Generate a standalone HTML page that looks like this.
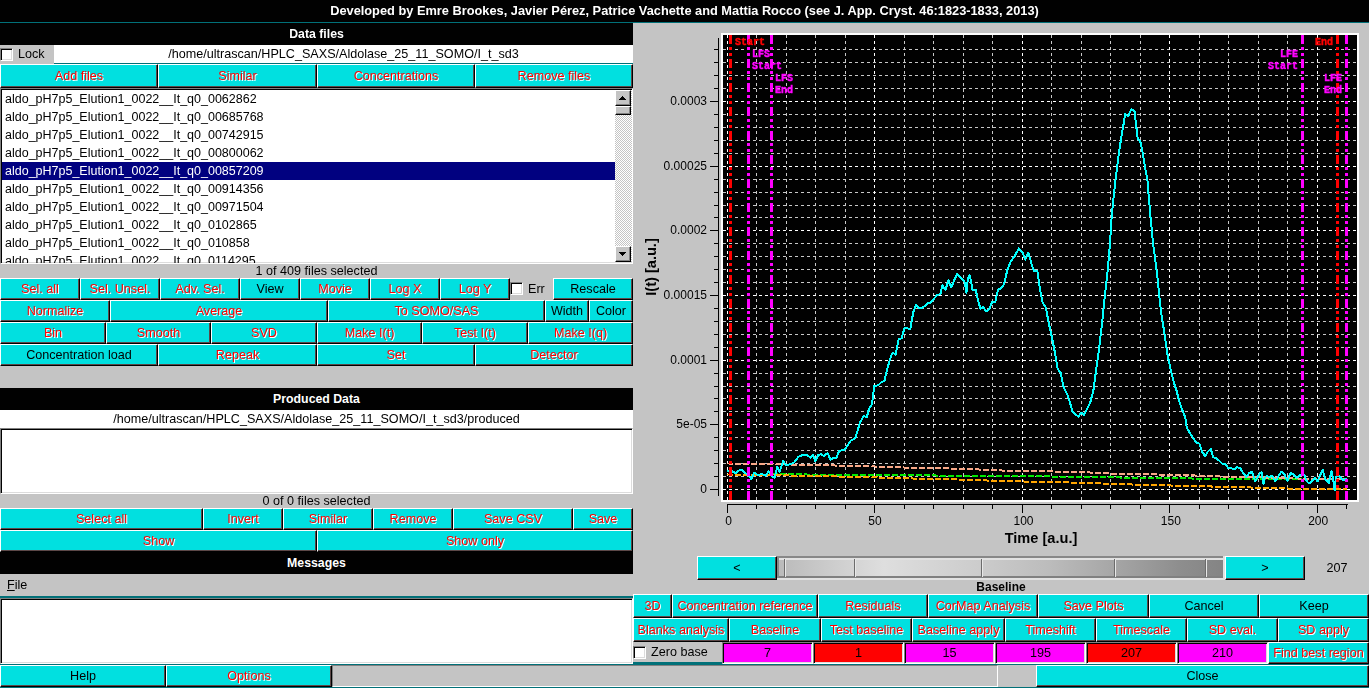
<!DOCTYPE html>
<html><head><meta charset="utf-8"><title>US-SOMO HPLC/KIN</title>
<style>
html,body{margin:0;padding:0}
body{width:1369px;height:688px;overflow:hidden;position:relative;background:#c4c4c4;font-family:"Liberation Sans",Arial,Helvetica,sans-serif;font-size:12.6px;color:#000}
div{position:absolute;box-sizing:border-box;white-space:nowrap}
.r{}
.b{background:#00e0e0;border-top:1px solid #fff;border-left:1px solid #fff;border-right:1px solid #000;border-bottom:1px solid #000;box-shadow:inset -1px -1px 0 #5c4848;text-align:center;color:#f00;text-shadow:1px 1px 0 #fff;overflow:hidden}
.b.en{color:#000;text-shadow:none}
.hdr{background:#000;color:#fff;font-weight:bold;text-align:center;font-size:12.3px}
.lbl{text-align:center}
.wf{background:#fff;text-align:center}
.sunk{background:#fff;border-top:1px solid #808080;border-left:1px solid #808080;border-right:1px solid #fff;border-bottom:1px solid #fff;box-shadow:inset 1px 1px 0 #000,inset -1px -1px 0 #dcdcdc}
.cb{width:13px;height:13px;background:#fff;border-top:1px solid #808080;border-left:1px solid #808080;border-right:1px solid #fff;border-bottom:1px solid #fff;box-shadow:inset 1px 1px 0 #000,inset -1px -1px 0 #dcdcdc}
.li{left:1px;width:613px;height:18px;line-height:18px;padding-left:3px;font-size:12.5px}
.li.sel{background:#000080;color:#fff}
.sbb{background:#c4c4c4;border-top:1px solid #fff;border-left:1px solid #fff;border-right:1px solid #000;border-bottom:1px solid #000;box-shadow:inset -1px -1px 0 #808080}
.fld{border-top:1px solid #808080;border-left:1px solid #808080;border-right:1px solid #fff;border-bottom:1px solid #fff;box-shadow:inset 1px 1px 0 #000,inset -1px -1px 0 #dcdcdc;text-align:center}
svg{position:absolute;left:0;top:0}
#w{left:0;top:0;width:1369px;height:688px;opacity:.9999}
</style></head><body><div id="w">

<div class="hdr" style="left:0;top:0;width:1369px;height:22px;line-height:21px;font-size:12.8px">Developed by Emre Brookes, Javier Pérez, Patrice Vachette and Mattia Rocco (see J. App. Cryst. 46:1823-1833, 2013)</div>
<div class="r" style="left:0px;top:22px;width:1369px;height:1px;background:#007078"></div>
<div class="hdr" style="left:0px;top:23px;width:633px;height:22px;line-height:22px">Data files</div>
<div class="cb" style="left:0px;top:48px"></div>
<div class="lbl" style="left:18px;top:45px;width:30px;height:19px;line-height:19px;text-align:left">Lock</div>
<div class="wf" style="left:54px;top:45px;width:579px;height:18px;line-height:18px;">/home/ultrascan/HPLC_SAXS/Aldolase_25_11_SOMO/I_t_sd3</div>
<div class="r" style="left:54px;top:63px;width:579px;height:1px;background:#007078"></div>
<div class="b" style="left:0px;top:64px;width:158px;height:24px;line-height:23px">Add files</div>
<div class="b" style="left:158px;top:64px;width:159px;height:24px;line-height:23px">Similar</div>
<div class="b" style="left:317px;top:64px;width:158px;height:24px;line-height:23px">Concentrations</div>
<div class="b" style="left:475px;top:64px;width:158px;height:24px;line-height:23px">Remove files</div>
<div class="sunk" style="left:0;top:88px;width:633px;height:176px;overflow:hidden">
<div class="li" style="top:1px">aldo_pH7p5_Elution1_0022__It_q0_0062862</div>
<div class="li" style="top:19px">aldo_pH7p5_Elution1_0022__It_q0_00685768</div>
<div class="li" style="top:37px">aldo_pH7p5_Elution1_0022__It_q0_00742915</div>
<div class="li" style="top:55px">aldo_pH7p5_Elution1_0022__It_q0_00800062</div>
<div class="li sel" style="top:73px">aldo_pH7p5_Elution1_0022__It_q0_00857209</div>
<div class="li" style="top:91px">aldo_pH7p5_Elution1_0022__It_q0_00914356</div>
<div class="li" style="top:109px">aldo_pH7p5_Elution1_0022__It_q0_00971504</div>
<div class="li" style="top:127px">aldo_pH7p5_Elution1_0022__It_q0_0102865</div>
<div class="li" style="top:145px">aldo_pH7p5_Elution1_0022__It_q0_010858</div>
<div class="li" style="top:163px">aldo_pH7p5_Elution1_0022__It_q0_0114295</div>
<div class="r" style="left:614px;top:1px;width:17px;height:172px;background:#fff;background-image:conic-gradient(#c4c4c4 25%,#fff 0 50%,#c4c4c4 0 75%,#fff 0);background-size:2px 2px"></div>
<div class="sbb" style="left:614px;top:1px;width:16px;height:16px"></div>
<div class="sbb" style="left:614px;top:17px;width:16px;height:9px"></div>
<div class="sbb" style="left:614px;top:157px;width:16px;height:16px"></div>
</div>
<div class="lbl" style="left:0px;top:264px;width:633px;height:14px;line-height:14px;">1 of 409 files selected</div>
<div class="b" style="left:0px;top:278px;width:80px;height:22px;line-height:21px">Sel. all</div>
<div class="b" style="left:80px;top:278px;width:80px;height:22px;line-height:21px">Sel. Unsel.</div>
<div class="b" style="left:160px;top:278px;width:80px;height:22px;line-height:21px">Adv. Sel.</div>
<div class="b en" style="left:240px;top:278px;width:60px;height:22px;line-height:21px">View</div>
<div class="b" style="left:300px;top:278px;width:70px;height:22px;line-height:21px">Movie</div>
<div class="b" style="left:370px;top:278px;width:70px;height:22px;line-height:21px">Log X</div>
<div class="b" style="left:440px;top:278px;width:70px;height:22px;line-height:21px">Log Y</div>
<div class="cb" style="left:510px;top:282px"></div>
<div class="lbl" style="left:528px;top:278px;width:24px;height:22px;line-height:22px;text-align:left">Err</div>
<div class="b en" style="left:553px;top:278px;width:80px;height:22px;line-height:21px">Rescale</div>
<div class="b" style="left:0px;top:300px;width:110px;height:22px;line-height:21px">Normalize</div>
<div class="b" style="left:110px;top:300px;width:218px;height:22px;line-height:21px">Average</div>
<div class="b" style="left:328px;top:300px;width:217px;height:22px;line-height:21px">To SOMO/SAS</div>
<div class="b en" style="left:545px;top:300px;width:44px;height:22px;line-height:21px">Width</div>
<div class="b en" style="left:589px;top:300px;width:44px;height:22px;line-height:21px">Color</div>
<div class="b" style="left:0px;top:322px;width:106px;height:22px;line-height:21px">Bin</div>
<div class="b" style="left:106px;top:322px;width:105px;height:22px;line-height:21px">Smooth</div>
<div class="b" style="left:211px;top:322px;width:106px;height:22px;line-height:21px">SVD</div>
<div class="b" style="left:317px;top:322px;width:105px;height:22px;line-height:21px">Make I(t)</div>
<div class="b" style="left:422px;top:322px;width:106px;height:22px;line-height:21px">Test I(t)</div>
<div class="b" style="left:528px;top:322px;width:105px;height:22px;line-height:21px">Make I(q)</div>
<div class="b en" style="left:0px;top:344px;width:158px;height:22px;line-height:21px">Concentration load</div>
<div class="b" style="left:158px;top:344px;width:159px;height:22px;line-height:21px">Repeak</div>
<div class="b" style="left:317px;top:344px;width:158px;height:22px;line-height:21px">Set</div>
<div class="b" style="left:475px;top:344px;width:158px;height:22px;line-height:21px">Detector</div>
<div class="hdr" style="left:0px;top:388px;width:633px;height:22px;line-height:22px">Produced Data</div>
<div class="wf" style="left:0px;top:410px;width:633px;height:18px;line-height:18px;">/home/ultrascan/HPLC_SAXS/Aldolase_25_11_SOMO/I_t_sd3/produced</div>
<div class="sunk" style="left:0;top:428px;width:633px;height:66px"></div>
<div class="lbl" style="left:0px;top:494px;width:633px;height:15px;line-height:15px;">0 of 0 files selected</div>
<div class="b" style="left:0px;top:508px;width:203px;height:22px;line-height:21px">Select all</div>
<div class="b" style="left:203px;top:508px;width:80px;height:22px;line-height:21px">Invert</div>
<div class="b" style="left:283px;top:508px;width:90px;height:22px;line-height:21px">Similar</div>
<div class="b" style="left:373px;top:508px;width:80px;height:22px;line-height:21px">Remove</div>
<div class="b" style="left:453px;top:508px;width:120px;height:22px;line-height:21px">Save CSV</div>
<div class="b" style="left:573px;top:508px;width:60px;height:22px;line-height:21px">Save</div>
<div class="b" style="left:0px;top:530px;width:317px;height:22px;line-height:21px">Show</div>
<div class="b" style="left:317px;top:530px;width:316px;height:22px;line-height:21px">Show only</div>
<div class="hdr" style="left:0px;top:552px;width:633px;height:22px;line-height:22px">Messages</div>
<div class="lbl" style="left:7px;top:574px;width:40px;height:22px;line-height:22px;text-align:left"><span style="text-decoration:underline">F</span>ile</div>
<div class="r" style="left:0px;top:596px;width:633px;height:2px;background:#007078"></div>
<div class="sunk" style="left:0;top:598px;width:633px;height:66px"></div>
<div class="b en" style="left:0px;top:665px;width:166px;height:22px;line-height:21px">Help</div>
<div class="b" style="left:166px;top:665px;width:166px;height:22px;line-height:21px">Options</div>
<div class="r" style="left:332px;top:665px;width:666px;height:22px;border-top:1px solid #808080;border-left:1px solid #808080;border-right:1px solid #fff;border-bottom:1px solid #fff"></div>
<div class="b en" style="left:1036px;top:665px;width:333px;height:22px;line-height:21px">Close</div>
<div class="r" style="left:0px;top:664px;width:1369px;height:1px;background:#007078"></div>
<div class="r" style="left:0px;top:687px;width:1369px;height:1px;background:#007078"></div>
<div class="b en" style="left:697px;top:556px;width:80px;height:24px;line-height:23px">&lt;</div>
<div class="b en" style="left:1225px;top:556px;width:80px;height:24px;line-height:23px">&gt;</div>
<div class="lbl" style="left:1311px;top:556px;width:52px;height:24px;line-height:24px;">207</div>
<div class="r" style="left:777px;top:556px;width:448px;height:24px;background:#e2e2e2"></div>
<div class="r" style="left:777px;top:556px;width:446px;height:22px;background:#888"></div>
<div class="r" style="left:779px;top:558px;width:444px;height:2px;background:#e2e2e2"></div>
<div class="r" style="left:779px;top:560px;width:444px;height:16px;background:linear-gradient(90deg,#bababa 0,#cfcfcf 60px,#dedede 105px,#cccccc 200px,#bcbcbc 270px,#a6a6a6 335px,#8e8e8e 400px,#848484 444px)"></div>
<div class="r" style="left:779px;top:576px;width:444px;height:2px;background:#808080"></div>
<div class="r" style="left:784px;top:559px;width:1px;height:18px;background:#6c6c6c"></div>
<div class="r" style="left:785px;top:559px;width:1px;height:18px;background:#e8e8e8"></div>
<div class="r" style="left:854px;top:559px;width:1px;height:18px;background:#6c6c6c"></div>
<div class="r" style="left:855px;top:559px;width:1px;height:18px;background:#e8e8e8"></div>
<div class="r" style="left:981px;top:559px;width:1px;height:18px;background:#6c6c6c"></div>
<div class="r" style="left:982px;top:559px;width:1px;height:18px;background:#e8e8e8"></div>
<div class="r" style="left:1114px;top:559px;width:1px;height:18px;background:#6c6c6c"></div>
<div class="r" style="left:1115px;top:559px;width:1px;height:18px;background:#e8e8e8"></div>
<div class="r" style="left:1205px;top:559px;width:1px;height:18px;background:#6c6c6c"></div>
<div class="r" style="left:1206px;top:559px;width:1px;height:18px;background:#e8e8e8"></div>
<div class="lbl" style="left:633px;top:580px;width:736px;height:14px;line-height:14px;font-weight:bold;font-size:12px">Baseline</div>
<div class="b" style="left:633px;top:594px;width:39px;height:24px;line-height:23px">3D</div>
<div class="b" style="left:672px;top:594px;width:146px;height:24px;line-height:23px">Concentration reference</div>
<div class="b" style="left:818px;top:594px;width:110px;height:24px;line-height:23px">Residuals</div>
<div class="b" style="left:928px;top:594px;width:110px;height:24px;line-height:23px">CorMap Analysis</div>
<div class="b" style="left:1038px;top:594px;width:111px;height:24px;line-height:23px">Save Plots</div>
<div class="b en" style="left:1149px;top:594px;width:110px;height:24px;line-height:23px">Cancel</div>
<div class="b en" style="left:1259px;top:594px;width:110px;height:24px;line-height:23px">Keep</div>
<div class="b" style="left:633px;top:618px;width:96px;height:24px;line-height:23px">Blanks analysis</div>
<div class="b" style="left:729px;top:618px;width:92px;height:24px;line-height:23px">Baseline</div>
<div class="b" style="left:821px;top:618px;width:91px;height:24px;line-height:23px">Test baseline</div>
<div class="b" style="left:912px;top:618px;width:93px;height:24px;line-height:23px">Baseline apply</div>
<div class="b" style="left:1005px;top:618px;width:91px;height:24px;line-height:23px">Timeshift</div>
<div class="b" style="left:1096px;top:618px;width:91px;height:24px;line-height:23px">Timescale</div>
<div class="b" style="left:1187px;top:618px;width:91px;height:24px;line-height:23px">SD eval.</div>
<div class="b" style="left:1278px;top:618px;width:91px;height:24px;line-height:23px">SD apply</div>
<div class="cb" style="left:633px;top:646px"></div>
<div class="lbl" style="left:651px;top:641px;width:70px;height:22px;line-height:22px;text-align:left">Zero base</div>
<div class="fld" style="left:722px;top:642px;width:91px;height:22px;line-height:20px;background:#ff00ff">7</div>
<div class="fld" style="left:813px;top:642px;width:91px;height:22px;line-height:20px;background:#ff0000">1</div>
<div class="fld" style="left:904px;top:642px;width:91px;height:22px;line-height:20px;background:#ff00ff">15</div>
<div class="fld" style="left:995px;top:642px;width:91px;height:22px;line-height:20px;background:#ff00ff">195</div>
<div class="fld" style="left:1086px;top:642px;width:91px;height:22px;line-height:20px;background:#ff0000">207</div>
<div class="fld" style="left:1177px;top:642px;width:91px;height:22px;line-height:20px;background:#ff00ff">210</div>
<div class="b" style="left:1268px;top:642px;width:101px;height:22px;line-height:21px">Find best region</div>
<div class="r" style="left:633px;top:662px;width:89px;height:2px;background:#007078"></div>
<svg width="1369" height="688" viewBox="0 0 1369 688" shape-rendering="crispEdges" font-family="Liberation Sans, Arial, sans-serif" font-size="12.6">
<rect x="721" y="33" width="638" height="469" fill="#fff"/>
<rect x="723" y="35" width="634" height="465" fill="#000"/>
<clipPath id="cv"><rect x="723" y="35" width="634" height="465"/></clipPath>
<g clip-path="url(#cv)">
<path d="M756.5 35V500M786.5 35V500M815.5 35V500M845.5 35V500M904.5 35V500M933.5 35V500M963.5 35V500M992.5 35V500M1051.5 35V500M1081.5 35V500M1110.5 35V500M1140.5 35V500M1199.5 35V500M1228.5 35V500M1258.5 35V500M1287.5 35V500M1346.5 35V500M723 476.5H1357M723 463.5H1357M723 450.5H1357M723 437.5H1357M723 411.5H1357M723 398.5H1357M723 386.5H1357M723 373.5H1357M723 347.5H1357M723 334.5H1357M723 321.5H1357M723 308.5H1357M723 282.5H1357M723 269.5H1357M723 256.5H1357M723 243.5H1357M723 217.5H1357M723 205.5H1357M723 192.5H1357M723 179.5H1357M723 153.5H1357M723 140.5H1357M723 127.5H1357M723 114.5H1357M723 88.5H1357M723 75.5H1357M723 62.5H1357M723 49.5H1357" stroke="#c8c8c8" stroke-width="1" stroke-dasharray="3 3" fill="none"/>
<path d="M727.5 35V500M874.5 35V500M1022.5 35V500M1169.5 35V500M1317.5 35V500M723 489.5H1357M723 424.5H1357M723 360.5H1357M723 295.5H1357M723 230.5H1357M723 166.5H1357M723 101.5H1357" stroke="#fff" stroke-width="1" stroke-dasharray="3 3" fill="none"/>
<path d="M772 474L807 474.5L870 475L1000 476L1100 477L1140 478L1243 479L1302 479.5" stroke="#00e800" stroke-width="2" stroke-dasharray="6 2" fill="none"/>
<path d="M727.5 474.5L770 475L807 476L870 477L885 478L940 479L975 480L998 481L1050 482L1090 483L1113 484L1150 485L1192 486L1230 487L1271 488L1305 489L1347 489" stroke="#ffa500" stroke-width="2" stroke-dasharray="6 2" fill="none"/>
<path d="M727.5 463.5L770 464L800 465L870 466L880 467L975 469L983 470L1020 471L1088 472L1092 473L1128 474L1190 475L1200 476L1240 477L1290 478L1305 479L1347 479" stroke="#f8a888" stroke-width="2" stroke-dasharray="6 2" fill="none"/>
<path d="M727.3 470.9L732.4 471.5L736.0 473.4L738.9 470.5L741.8 470.1L744.7 472.7L748.3 474.9L751.2 479.2L754.2 472.7L757.8 474.9L762.2 474.1L765.8 475.6L768.7 471.2L771.6 475.6L774.5 477.8L777.4 466.9L779.6 471.9L783.2 461.0L786.1 465.4L791.2 464.0L794.1 462.5L798.5 456.7L802.8 454.9L807.2 455.2L810.8 457.8L813.0 455.2L815.2 461.0L818.1 455.2L821.0 454.1L823.9 456.0L827.6 453.1L830.5 459.6L833.4 458.1L836.3 458.1L839.2 450.9L845.0 449.4L850.8 440.7L855.2 438.5L860.3 421.8L863.9 416.0L866.8 417.2L869.0 408.7L871.9 404.4L874.2 386.2L878.3 385.2L881.4 382.1L884.4 381.1L887.5 367.9L890.5 357.7L892.6 352.6L895.6 354.6L898.7 339.4L901.7 338.3L904.4 328.2L907.2 328.2L910.3 329.2L913.3 311.9L916.0 305.2L919.0 308.4L922.1 307.8L925.1 305.8L928.2 303.1L931.2 302.3L934.3 298.3L937.3 295.0L940.4 294.2L942.4 285.4L945.5 289.5L948.5 280.4L951.2 287.5L954.2 280.4L957.3 273.8L960.1 277.3L963.2 280.4L964.8 282.4L966.4 292.6L967.9 278.3L969.5 275.3L971.1 281.4L972.5 289.5L975.6 289.5L978.4 301.7L980.5 308.8L983.1 306.8L986.2 311.3L989.4 308.8L992.3 301.7L995.3 301.7L998.0 289.5L1000.0 289.2L1003.9 284.5L1007.3 270.1L1011.0 260.9L1014.9 255.7L1018.8 248.4L1022.2 251.8L1025.4 259.6L1028.3 252.6L1031.4 263.5L1034.0 270.9L1037.4 270.9L1040.0 289.7L1042.6 302.8L1045.8 307.5L1048.9 323.7L1051.8 336.8L1054.9 352.5L1057.6 368.7L1060.7 372.9L1063.6 387.0L1066.7 393.1L1069.3 400.1L1072.5 411.4L1075.9 414.8L1078.5 416.6L1081.1 412.7L1084.2 414.8L1087.1 408.8L1090.3 402.2L1093.4 390.4L1096.0 370.8L1098.9 349.9L1102.0 323.7L1104.7 297.6L1107.3 274.0L1109.9 245.2L1111.7 215.9L1113.6 197.3L1115.9 176.4L1118.3 157.8L1121.0 139.2L1123.4 125.2L1125.2 114.1L1128.0 116.4L1131.5 109.0L1134.5 111.3L1136.4 127.6L1137.6 138.0L1140.3 141.5L1142.7 153.1L1145.0 167.1L1147.3 178.7L1149.2 202.0L1151.3 225.2L1153.1 243.8L1155.1 258.6L1157.4 277.2L1159.3 295.8L1161.4 314.4L1164.4 333.0L1167.4 354.0L1170.7 370.2L1174.4 384.2L1176.4 390.0L1178.8 399.6L1182.0 409.2L1185.2 417.2L1186.8 427.6L1190.0 433.2L1193.2 438.0L1196.4 442.7L1199.3 443.5L1202.0 451.5L1205.2 456.3L1207.9 451.5L1210.8 449.1L1213.2 457.1L1216.4 458.4L1219.6 461.1L1222.4 463.8L1225.1 463.8L1228.3 468.0L1231.5 468.3L1234.4 469.1L1237.1 467.2L1240.3 468.3L1243.2 473.1L1246.2 477.1L1249.1 473.1L1252.0 472.0L1255.2 480.8L1258.2 476.3L1260.0 473.2L1261.6 472.0L1263.4 484.0L1264.8 478.0L1266.4 476.0L1269.4 476.8L1272.4 476.0L1275.4 481.2L1278.4 476.4L1281.4 471.6L1284.4 474.4L1287.4 480.8L1290.4 473.2L1293.4 474.0L1296.4 478.0L1299.4 475.6L1301.6 474.0L1304.4 474.8L1306.6 480.8L1308.6 483.2L1311.6 482.0L1314.6 478.0L1317.6 481.2L1320.0 475.6L1322.6 469.6L1325.5 479.6L1328.6 483.2L1331.5 471.2L1333.1 478.4L1334.6 490.4L1335.9 476.8L1339.1 476.0L1343.1 480.0L1346.7 478.8" stroke="#00ffff" stroke-width="2" fill="none" stroke-linejoin="round"/>
<path d="M730.5 35V500" stroke="#ff0000" stroke-width="3" stroke-dasharray="9 3 3 3 3 3" fill="none"/>
<path d="M748.5 35V500" stroke="#ff00ff" stroke-width="3" stroke-dasharray="9 3 3 3 3 3" fill="none"/>
<path d="M771.5 35V500" stroke="#ff00ff" stroke-width="3" stroke-dasharray="9 3 3 3 3 3" fill="none"/>
<path d="M1302.5 35V500" stroke="#ff00ff" stroke-width="3" stroke-dasharray="9 3 3 3 3 3" fill="none"/>
<path d="M1337.5 35V500" stroke="#ff0000" stroke-width="3" stroke-dasharray="9 3 3 3 3 3" fill="none"/>
<path d="M1346.5 35V500" stroke="#ff00ff" stroke-width="3" stroke-dasharray="9 3 3 3 3 3" fill="none"/>
</g>
<text x="735" y="45.3" fill="#ff0000" stroke="#ff0000" stroke-width="0.45" font-family="Liberation Mono, monospace" font-weight="bold" font-size="10" text-anchor="start">Start</text>
<text x="752" y="57.3" fill="#ff00ff" stroke="#ff00ff" stroke-width="0.45" font-family="Liberation Mono, monospace" font-weight="bold" font-size="10" text-anchor="start">LFS</text>
<text x="752" y="69.3" fill="#ff00ff" stroke="#ff00ff" stroke-width="0.45" font-family="Liberation Mono, monospace" font-weight="bold" font-size="10" text-anchor="start">Start</text>
<text x="775" y="81.3" fill="#ff00ff" stroke="#ff00ff" stroke-width="0.45" font-family="Liberation Mono, monospace" font-weight="bold" font-size="10" text-anchor="start">LFS</text>
<text x="775" y="93.3" fill="#ff00ff" stroke="#ff00ff" stroke-width="0.45" font-family="Liberation Mono, monospace" font-weight="bold" font-size="10" text-anchor="start">End</text>
<text x="1333" y="45.3" fill="#ff0000" stroke="#ff0000" stroke-width="0.45" font-family="Liberation Mono, monospace" font-weight="bold" font-size="10" text-anchor="end">End</text>
<text x="1298" y="57.3" fill="#ff00ff" stroke="#ff00ff" stroke-width="0.45" font-family="Liberation Mono, monospace" font-weight="bold" font-size="10" text-anchor="end">LFE</text>
<text x="1298" y="69.3" fill="#ff00ff" stroke="#ff00ff" stroke-width="0.45" font-family="Liberation Mono, monospace" font-weight="bold" font-size="10" text-anchor="end">Start</text>
<text x="1342" y="81.3" fill="#ff00ff" stroke="#ff00ff" stroke-width="0.45" font-family="Liberation Mono, monospace" font-weight="bold" font-size="10" text-anchor="end">LFE</text>
<text x="1342" y="93.3" fill="#ff00ff" stroke="#ff00ff" stroke-width="0.45" font-family="Liberation Mono, monospace" font-weight="bold" font-size="10" text-anchor="end">End</text>
<path d="M718.5 38V496M710 489.5H719M714 476.5H719M714 463.5H719M714 450.5H719M714 437.5H719M710 424.5H719M714 411.5H719M714 398.5H719M714 386.5H719M714 373.5H719M710 360.5H719M714 347.5H719M714 334.5H719M714 321.5H719M714 308.5H719M710 295.5H719M714 282.5H719M714 269.5H719M714 256.5H719M714 243.5H719M710 230.5H719M714 217.5H719M714 205.5H719M714 192.5H719M714 179.5H719M710 166.5H719M714 153.5H719M714 140.5H719M714 127.5H719M714 114.5H719M710 101.5H719M714 88.5H719M714 75.5H719M714 62.5H719M714 49.5H719M727 504.5H1348M727.5 504V513M756.5 504V509M786.5 504V509M815.5 504V509M845.5 504V509M874.5 504V513M904.5 504V509M933.5 504V509M963.5 504V509M992.5 504V509M1022.5 504V513M1051.5 504V509M1081.5 504V509M1110.5 504V509M1140.5 504V509M1169.5 504V513M1199.5 504V509M1228.5 504V509M1258.5 504V509M1287.5 504V509M1317.5 504V513M1346.5 504V509" stroke="#000" stroke-width="1" fill="none"/>
<text x="707" y="493.0" text-anchor="end" font-size="12">0</text>
<text x="707" y="428.4" text-anchor="end" font-size="12">5e-05</text>
<text x="707" y="363.7" text-anchor="end" font-size="12">0.0001</text>
<text x="707" y="299.1" text-anchor="end" font-size="12">0.00015</text>
<text x="707" y="234.4" text-anchor="end" font-size="12">0.0002</text>
<text x="707" y="169.8" text-anchor="end" font-size="12">0.00025</text>
<text x="707" y="105.1" text-anchor="end" font-size="12">0.0003</text>
<text x="728.7" y="525" text-anchor="middle" font-size="12">0</text>
<text x="875.0" y="525" text-anchor="middle" font-size="12">50</text>
<text x="1023.5" y="525" text-anchor="middle" font-size="12">100</text>
<text x="1170.8" y="525" text-anchor="middle" font-size="12">150</text>
<text x="1318.2" y="525" text-anchor="middle" font-size="12">200</text>
<text x="1041" y="543" text-anchor="middle" font-weight="bold" font-size="14.6">Time [a.u.]</text>
<text transform="translate(656,267) rotate(-90)" text-anchor="middle" font-weight="bold" font-size="14.6">I(t) [a.u.]</text>
<path d="M622 96h1v1h1v1h1v1h1v1h-7v-1h1v-1h1v-1h1z" fill="#000"/>
<path d="M619 252h7v1h-1v1h-1v1h-1v1h-1v-1h-1v-1h-1v-1h-1z" fill="#000"/>
</svg>
</div></body></html>
